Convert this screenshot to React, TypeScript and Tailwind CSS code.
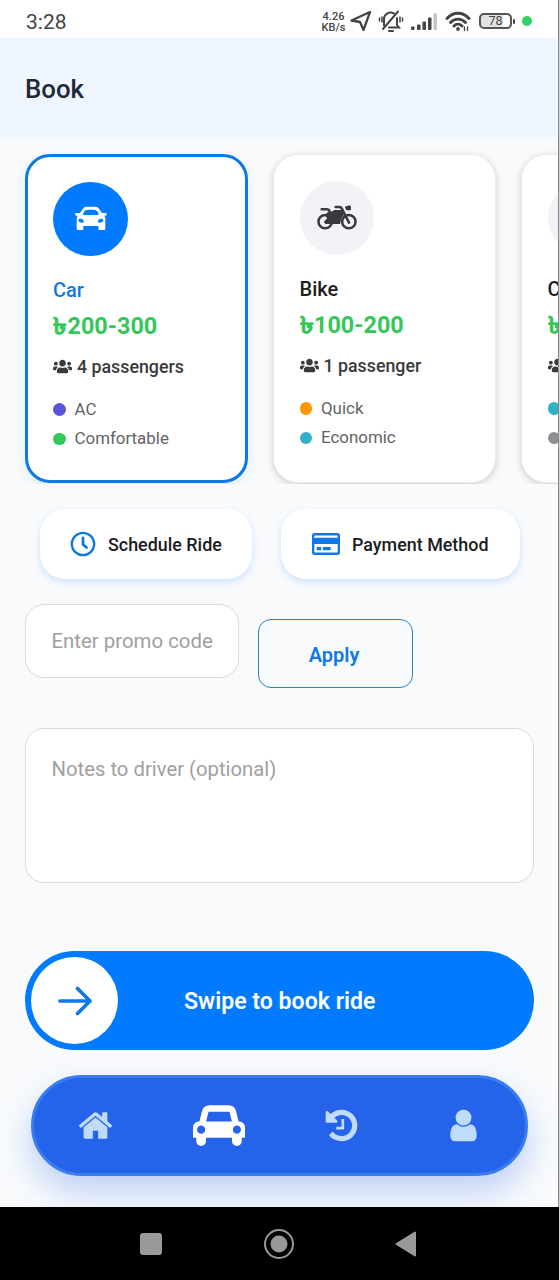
import React from "react";
import { FaRegCreditCard, FaUsers } from "react-icons/fa";

type Feature = { label: string; dot: string };

type RideProps = {
  name: string;
  price: string;
  seats: string;
  features: Feature[];
  icon: React.ReactNode;
  selected?: boolean;
};

function CarIcon() {
  return (
    <svg width="33" height="25" viewBox="175 186 99 75" fill="currentColor">
      <path
        fillRule="evenodd"
        d="M211 188h29q6 0 9 5l10 14h11q3 0 3 4t-4 4h-3q3 4 3 10v29q0 4-4 4h-13q-4 0-4-4v-8h-45v8q0 4-4 4h-12q-4 0-4-4v-29q0-6 3-10h-3q-5 0-5-4t4-4h11l10-14q3-5 8-5zM202 211q1-8 8-12 3-1.500 7-1.500h17q4 0 7 1.500 7 4 8 12 0 2-2 2h-43q-2 0-2-2zM190 225q8-2 13 3 3 6-1 8-7 1-12-3-4-5 0-8zM261 225q-8-2-13 3-3 6 1 8 7 1 12-3 4-5 0-8z"
      />
    </svg>
  );
}

function BikeIcon() {
  return (
    <svg width="40" height="25" viewBox="170 181 120 75" fill="none" stroke="currentColor" strokeWidth="7.500" strokeLinecap="round" strokeLinejoin="round">
      <circle cx="194.500" cy="231" r="20" />
      <circle cx="265.500" cy="231" r="20" />
      <path d="M184 194h15q6 0 9 5M226 187h12q4 0 6 4l22 43" />
      <path d="M195 232l14-14" />
      <path d="M204 203q11 2 18-5h21l5 13q-9 8-10 25h-42l6-10q2-8-6-13z" fill="currentColor" strokeWidth="4" />
      <path d="M257 188l9-3q3 0 3 3v6h-9z" fill="currentColor" strokeWidth="6" />
    </svg>
  );
}

function RideCard({ name, price, seats, features, icon, selected }: RideProps) {
  return (
    <div
      className={
        selected
          ? "h-[329px] w-[223px] shrink-0 rounded-[25px] border-[3px] border-[#0f78e4] bg-white px-[25px] pt-[24.500px] shadow-[0_4px_10px_rgba(60,140,220,0.14)]"
          : "h-[329px] w-[223px] shrink-0 rounded-[25px] border border-[#ebecee] bg-white px-[25.500px] pt-[25.500px] shadow-[0_2px_7px_rgba(0,0,0,0.18)]"
      }
    >
      <div
        className={
          selected
            ? "flex size-[74.500px] items-center justify-center rounded-full bg-[#007aff] text-white"
            : "flex size-[74.500px] items-center justify-center rounded-full bg-[#f2f2f7] text-[#3a3a3c]"
        }
      >
        {icon}
      </div>
      <div
        className={
          selected
            ? "mt-5 text-[20px] leading-[28px] font-medium text-[#1278e0]"
            : "mt-5 text-[20px] leading-[28px] font-medium text-[#1c1c1e]"
        }
      >
        {name}
      </div>
      <div className="mt-[6px] flex h-[32px] text-[23.400px] leading-[32px] font-bold whitespace-nowrap text-[#34c759]">
        <span className="w-[14.500px] shrink-0 origin-left scale-x-[1.200] [-webkit-text-stroke:0.400px_#34c759]">৳</span>
        <span>{price}</span>
      </div>
      <div className="mt-[12.500px] flex h-[24px] items-center gap-[5px] text-[17.800px] leading-[24px] font-medium whitespace-nowrap text-[#3a3a3c]">
        <FaUsers className="size-[19px] shrink-0" />
        {seats}
      </div>
      <div className="mt-[16px] flex flex-col">
        {features.map((f) => (
          <div key={f.label} className="flex h-[29.500px] items-center gap-[9px] text-[16.900px] text-[#636366]">
            <span className={"size-[12.500px] shrink-0 rounded-full " + f.dot} />
            {f.label}
          </div>
        ))}
      </div>
    </div>
  );
}

function StatusBar() {
  return (
    <div className="flex h-[38px] shrink-0 items-center bg-white pl-[26px] text-[#444]">
      <span className="mt-[5px] w-[295px] text-[21px] leading-6">3:28</span>
      <div className="mt-[5px] w-[25px] text-center text-[11px] leading-[11px] font-medium">
        <div>4.26</div>
        <div>KB/s</div>
      </div>
      <svg className="mt-[4px] ml-[4px]" width="22" height="22" viewBox="0 0 22 22" fill="none" stroke="#444" strokeWidth="2.300" strokeLinejoin="round">
        <path d="M20 2 1.500 10.500 10 12 13.500 20Z" />
      </svg>
      <svg className="mt-[4px] ml-[6px]" width="26" height="24" viewBox="0 0 26 24" fill="none" stroke="#444" strokeWidth="2" strokeLinecap="round">
        <path d="M6 16.500V10a6.500 6.500 0 0 1 10-5.500M19 9v7l2 2.500H11M5 20 20 2.500M11 22h4" />
        <path d="M4 8v5M1.500 9v3M22 8v5M24.500 9v3" strokeWidth="1.500" />
      </svg>
      <svg className="mt-[5px] ml-[7px]" width="27" height="17" viewBox="0 0 27 17" fill="#444">
        <rect x="0" y="13.500" width="3.500" height="3.500" rx="1" />
        <rect x="6" y="11.500" width="3.500" height="5.500" rx="1" />
        <rect x="11.500" y="8.500" width="3.500" height="8.500" rx="1" />
        <rect x="17" y="4.500" width="3.500" height="12.500" rx="1" />
        <rect x="22.500" y="0" width="3.500" height="17" rx="1" fill="#c6c6c6" />
      </svg>
      <svg className="mt-[4px] ml-[7px]" width="26" height="21" viewBox="0 0 26 21" fill="none" stroke="#444" strokeWidth="2.900" strokeLinecap="round">
        <path d="M2 7.500C8 .5 18 .5 24 7.500M5.500 11.500c4-4.500 11-4.500 15 0M9 15c2.300-2.300 5.700-2.300 8 0" />
        <circle cx="13" cy="18" r="1.900" fill="#444" stroke="none" />
        <path d="M19.500 16v3.500M22.500 16v3.500" strokeWidth="1.300" />
      </svg>
      <div className="mt-[4px] ml-[8px] flex h-[16px] w-[33px] items-center justify-center rounded-[5px] border-2 border-[#555] bg-gradient-to-r from-[#e2e2e2] from-75% to-white to-75% text-[12.500px] leading-none">
        78
      </div>
      <span className="mt-[4px] ml-px h-[5px] w-[2px] rounded bg-[#444]" />
      <span className="mt-[4px] ml-[7px] size-[10px] rounded-full bg-[#30d167]" />
    </div>
  );
}

const NAV = {
  home: "M1472 992v480q0 26-19 45t-45 19h-384v-384h-256v384h-384q-26 0-45-19t-19-45v-480q0-1 .5-3t.5-3l575-474 575 474q1 2 1 6zm223-69l-62 74q-8 9-21 11h-3q-13 0-21-7l-692-577-692 577q-12 8-24 7-13-2-21-11l-62-74q-8-10-7-23.500t11-21.500l719-599q32-26 76-26t76 26l244 204v-195q0-14 9-23t23-9h192q14 0 23 9t9 23v408l219 182q10 8 11 21.500t-7 23.500z",
  car: "M480 1088q0-66-47-113t-113-47-113 47-47 113 47 113 113 47 113-47 47-113zm36-320h1016l-89-357q-2-8-14-17.500t-21-9.500h-768q-9 0-21 9.500t-14 17.500zm1372 320q0-66-47-113t-113-47-113 47-47 113 47 113 113 47 113-47 47-113zm160-96v384q0 14-9 23t-23 9h-96v128q0 80-56 136t-136 56-136-56-56-136v-128h-1024v128q0 80-56 136t-136 56-136-56-56-136v-128h-96q-14 0-23-9t-9-23v-384q0-93 65.500-158.500t158.500-65.500h28l105-419q23-94 104-157.500t179-63.500h768q98 0 179 63.500t104 157.500l105 419h28q93 0 158.500 65.500t65.500 158.500z",
  history:
    "M1664 896q0 156-61 298t-164 245-245 164-298 61q-172 0-327-72.500t-264-204.500q-7-10-6.500-22.500t8.500-20.500l137-138q10-9 25-9 16 2 23 12 73 95 179 147t225 52q104 0 198.500-40.500t163.500-109.500 109.500-163.500 40.500-198.500-40.500-198.500-109.500-163.500-163.500-109.500-198.500-40.500q-98 0-188 35.500t-160 101.500l137 138q31 30 14 69-17 40-59 40h-448q-26 0-45-19t-19-45v-448q0-42 40-59 39-17 69 14l130 129q107-101 244.500-156.500t284.500-55.500q156 0 298 61t245 164 164 245 61 298zm-640-288v448q0 14-9 23t-23 9h-320q-14 0-23-9t-9-23v-64q0-14 9-23t23-9h224v-352q0-14 9-23t23-9h64q14 0 23 9t9 23z",
  user: "M1536 1399q0 109-62.500 187t-150.500 78h-854q-88 0-150.500-78t-62.500-187q0-85 8.500-160.500t31.500-152 58.500-131 94-89 134.500-34.500q131 128 313 128t313-128q76 0 134.500 34.500t94 89 58.500 131 31.500 152 8.500 160.500zm-256-887q0 159-112.500 271.500t-271.500 112.500-271.500-112.500-112.500-271.500 112.500-271.500 271.500-112.500 271.500 112.500 112.500 271.500z",
};

function TabBar() {
  return (
    <nav className="mt-[25px] mr-[30px] ml-[31px] flex h-[101px] shrink-0 items-center rounded-full border-[3px] border-[#3b7df0] bg-[#2563eb] pb-px pl-[43px] text-[#bfdbfe] shadow-[0_16px_32px_rgba(37,99,235,0.28)]">
      <svg width="37" height="37" viewBox="0 0 1792 1792" fill="currentColor"><path d={NAV.home} /></svg>
      <svg className="ml-[78.500px] text-white" width="52" height="45.500" viewBox="0 0 2048 1792" fill="currentColor"><path d={NAV.car} /></svg>
      <svg className="ml-[78px]" width="37" height="37" viewBox="0 0 1792 1792" fill="currentColor"><path d={NAV.history} /></svg>
      <svg className="ml-[85px]" width="37" height="37" viewBox="0 0 1792 1792" fill="currentColor"><path d={NAV.user} /></svg>
    </nav>
  );
}

export default function App() {
  return (
    <div className="flex h-[1280px] w-[559px] flex-col overflow-hidden bg-black font-['Roboto','Noto_Sans',sans-serif]">
      <div className="flex h-[1207px] shrink-0 flex-col overflow-hidden border-r border-[#85878a] bg-[#f8fafc]">
        <StatusBar />
        <header className="flex h-[99px] shrink-0 items-center bg-[#eff6ff] pt-[4px] pl-[25px] text-[25.800px] font-medium text-[#1f2937]">
          Book
        </header>

        <section className="flex h-[347px] shrink-0 gap-[25px] overflow-hidden pt-[17px] pl-[25px]">
          <RideCard
            selected
            name="Car"
            price="200-300"
            seats="4 passengers"
            icon={<CarIcon />}
            features={[
              { label: "AC", dot: "bg-[#5856d6]" },
              { label: "Comfortable", dot: "bg-[#34c759]" },
            ]}
          />
          <RideCard
            name="Bike"
            price="100-200"
            seats="1 passenger"
            icon={<BikeIcon />}
            features={[
              { label: "Quick", dot: "bg-[#ff9500]" },
              { label: "Economic", dot: "bg-[#30b0c7]" },
            ]}
          />
          <RideCard
            name="CNG"
            price="150-250"
            seats="3 passengers"
            icon={null}
            features={[
              { label: "Affordable", dot: "bg-[#30b0c7]" },
              { label: "Standard", dot: "bg-[#8e8e93]" },
            ]}
          />
        </section>

        <section className="mt-[25px] ml-[40px] flex shrink-0 gap-[29px] text-[17.900px] font-medium whitespace-nowrap text-[#1c1c1e]">
          <button className="flex h-[70px] w-[212px] items-center gap-[11px] rounded-[25px] bg-white pl-[30px] shadow-[0_3px_7px_rgba(0,122,255,0.18)]">
            <svg className="shrink-0" width="27" height="27" viewBox="0 0 27 27" fill="none" stroke="#1078e6" strokeLinecap="round" strokeLinejoin="round">
              <circle cx="13" cy="13" r="11.200" strokeWidth="2.300" />
              <path d="M13 7v6.500l3.500 3" strokeWidth="2.800" />
            </svg>
            <span className="pt-[2px]">Schedule Ride</span>
          </button>
          <button className="flex h-[70px] w-[239px] items-center gap-[12px] rounded-[25px] bg-white pl-[31px] shadow-[0_3px_7px_rgba(0,122,255,0.18)]">
            <FaRegCreditCard className="size-[28px] shrink-0 text-[#1078e6]" />
            <span className="pt-[2px]">Payment Method</span>
          </button>
        </section>

        <section className="mt-[25px] ml-[25px] flex h-[84px] shrink-0 items-start gap-[18.500px]">
          <input
            placeholder="Enter promo code"
            className="h-[74px] w-[214px] rounded-[19px] border-[1.500px] border-[#d9dadd] bg-white pl-[25.500px] text-[20.400px] placeholder:text-[#a0a0a0]"
          />
          <button className="mt-[15px] h-[69px] w-[155px] rounded-[13px] border-[1.600px] border-[#2580cf] pt-[2px] pr-[2px] text-[20px] font-semibold text-[#1078e6]">
            Apply
          </button>
        </section>

        <textarea
          placeholder="Notes to driver (optional)"
          className="mr-[24px] ml-[25px] mt-[40px] h-[155px] shrink-0 resize-none rounded-[19px] border-[1.500px] border-[#d9dadd] bg-white px-[25.500px] pt-[28px] text-[20.300px] leading-[24px] placeholder:text-[#a0a0a0]"
        />

        <div className="mr-[24px] ml-[25px] mt-[68px] flex h-[99px] shrink-0 items-center rounded-full bg-[#007aff] pl-[6px]">
          <span className="flex size-[87px] items-center justify-center rounded-full bg-white">
            <svg width="34" height="32" viewBox="0 0 34 32" fill="none" stroke="#1078e6" strokeWidth="3.700" strokeLinecap="round" strokeLinejoin="round">
              <path d="M2 16h30M19.500 3.500 32 16 19.500 28.500" />
            </svg>
          </span>
          <span className="mt-[3px] ml-[66px] text-[23.100px] font-semibold text-white">Swipe to book ride</span>
        </div>

        <TabBar />
      </div>

      <div className="flex h-[73px] shrink-0 items-center pl-[140px]">
        <span className="size-[22px] rounded-[3px] bg-[#999]" />
        <svg className="ml-[102px]" width="30" height="30" viewBox="0 0 30 30">
          <circle cx="15" cy="15" r="14" fill="none" stroke="#999" strokeWidth="2" />
          <circle cx="15" cy="15" r="8.500" fill="#999" />
        </svg>
        <svg className="ml-[101px]" width="22" height="26" viewBox="0 0 22 26">
          <path d="M20 1.500V24.500L1.500 13Z" fill="#999" stroke="#999" strokeWidth="2" strokeLinejoin="round" />
        </svg>
      </div>
    </div>
  );
}
